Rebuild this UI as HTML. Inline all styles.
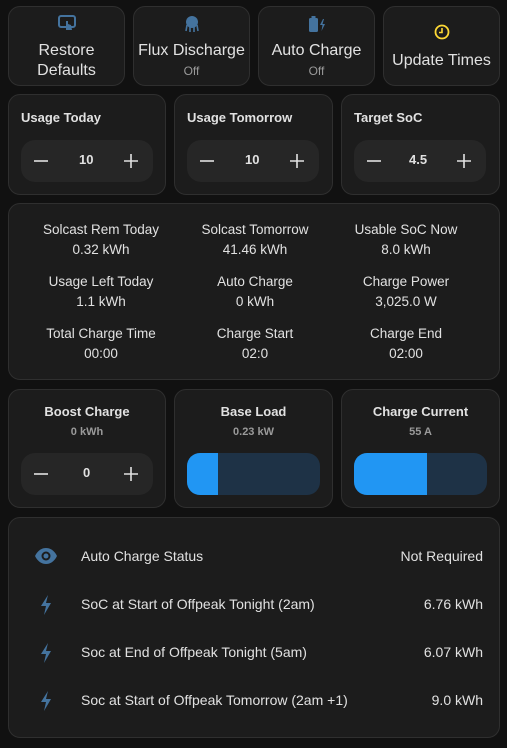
<!DOCTYPE html>
<html><head><meta charset="utf-8"><style>
*{box-sizing:border-box;margin:0;padding:0}
body{width:507px;height:748px;background:#111;font-family:"Liberation Sans",sans-serif;color:#e1e1e1;position:relative;overflow:hidden}
.c{position:absolute;background:#1c1c1c;border:1px solid #2f2f2f;border-radius:12px}
.btn{text-align:center;font-size:16px;line-height:20px}
.btn .s{font-size:12px;color:#9a9a9a;line-height:14px}
.t{position:absolute;left:12px;top:15px;font-size:13px;font-weight:bold}
.step{position:absolute;left:12px;top:45px;width:132px;height:42px;background:#262626;border-radius:14px;font-size:13px;font-weight:bold}
.step span{position:absolute;top:12px}
.step svg{position:absolute;top:14px}
.grid div{position:absolute;width:150px;text-align:center;font-size:13.5px;line-height:20px}
.ct{position:absolute;width:100%;text-align:center;font-size:13px;font-weight:bold;top:14px}
.cs{position:absolute;width:100%;text-align:center;font-size:11px;font-weight:bold;color:#9a9a9a;top:36px}
.sl{position:absolute;left:12px;top:63px;width:133px;height:42px;border-radius:13px;background:#1e3246;overflow:hidden}
.sl i{position:absolute;left:0;top:0;bottom:0;background:#2196f3}
.row{position:absolute;left:0;width:100%;height:20px;font-size:14px}
.row .ic{position:absolute;left:25px;top:0}
.row .l{position:absolute;left:72px;top:2px}
.row .v{position:absolute;right:16px;top:2px}
</style></head><body>
<div class="c btn" style="left:8px;top:6px;width:117px;height:80px">
<svg style="position:absolute;left:49px;top:8px" width="18" height="18" viewBox="0 0 18 18"><rect x="1" y="1" width="16" height="11" rx="2" fill="none" stroke="#44739e" stroke-width="2"/><path d="M8 6v9h6l-1-5-3-1V6z" fill="#44739e"/></svg>
<div style="position:absolute;top:34px;width:100%">Restore<br>Defaults</div></div>
<div class="c btn" style="left:133px;top:6px;width:117px;height:80px">
<svg style="position:absolute;left:50px;top:8px" width="16" height="18" viewBox="0 0 16 18"><circle cx="8" cy="7" r="6" fill="#44739e"/><path d="M3 10l-1 6M6 11v6M10 11v6M13 10l1 6" stroke="#44739e" stroke-width="1.6" fill="none"/></svg>
<div style="position:absolute;top:34px;width:100%">Flux Discharge</div><div class="s" style="position:absolute;top:57px;width:100%">Off</div></div>
<div class="c btn" style="left:258px;top:6px;width:117px;height:80px">
<svg style="position:absolute;left:49px;top:8px" width="20" height="18" viewBox="0 0 20 18"><rect x="1" y="3" width="9" height="14" rx="1.5" fill="#44739e"/><rect x="3.5" y="1" width="4" height="2" fill="#44739e"/><path d="M15 4l-3 6h2.5l-1 6 3.5-7h-2.5l1.5-5z" fill="#44739e"/></svg>
<div style="position:absolute;top:34px;width:100%">Auto Charge</div><div class="s" style="position:absolute;top:57px;width:100%">Off</div></div>
<div class="c btn" style="left:383px;top:6px;width:117px;height:80px">
<svg style="position:absolute;left:50px;top:17px" width="16" height="16" viewBox="0 0 16 16"><circle cx="8" cy="8" r="6.5" fill="none" stroke="#fdd835" stroke-width="1.8"/><path d="M8 4v4.5H5" stroke="#fdd835" stroke-width="1.6" fill="none"/></svg>
<div style="position:absolute;top:44px;width:100%">Update Times</div></div>

<div class="c" style="left:8px;top:94px;width:158px;height:101px"><div class="t">Usage Today</div><div class="step"><svg style="left:13px" width="14" height="14"><path d="M0 7h14" stroke="#e1e1e1" stroke-width="1.6"/></svg><span style="left:58px">10</span><svg style="left:103px" width="14" height="14"><path d="M0 7h14M7 0v14" stroke="#e1e1e1" stroke-width="1.6"/></svg></div></div>
<div class="c" style="left:174px;top:94px;width:159px;height:101px"><div class="t">Usage Tomorrow</div><div class="step"><svg style="left:13px" width="14" height="14"><path d="M0 7h14" stroke="#e1e1e1" stroke-width="1.6"/></svg><span style="left:58px">10</span><svg style="left:103px" width="14" height="14"><path d="M0 7h14M7 0v14" stroke="#e1e1e1" stroke-width="1.6"/></svg></div></div>
<div class="c" style="left:341px;top:94px;width:159px;height:101px"><div class="t">Target SoC</div><div class="step"><svg style="left:13px" width="14" height="14"><path d="M0 7h14" stroke="#e1e1e1" stroke-width="1.6"/></svg><span style="left:55px">4.5</span><svg style="left:103px" width="14" height="14"><path d="M0 7h14M7 0v14" stroke="#e1e1e1" stroke-width="1.6"/></svg></div></div>

<div class="c grid" style="left:8px;top:203px;width:492px;height:177px">
<div style="left:17px;top:16px">Solcast Rem Today<br>0.32 kWh</div>
<div style="left:171px;top:16px">Solcast Tomorrow<br>41.46 kWh</div>
<div style="left:322px;top:16px">Usable SoC Now<br>8.0 kWh</div>
<div style="left:17px;top:68px">Usage Left Today<br>1.1 kWh</div>
<div style="left:171px;top:68px">Auto Charge<br>0 kWh</div>
<div style="left:322px;top:68px">Charge Power<br>3,025.0 W</div>
<div style="left:17px;top:120px">Total Charge Time<br>00:00</div>
<div style="left:171px;top:120px">Charge Start<br>02:0</div>
<div style="left:322px;top:120px">Charge End<br>02:00</div>
</div>

<div class="c" style="left:8px;top:389px;width:158px;height:119px"><div class="ct">Boost Charge</div><div class="cs">0 kWh</div><div class="step" style="top:63px"><svg style="left:13px" width="14" height="14"><path d="M0 7h14" stroke="#e1e1e1" stroke-width="1.6"/></svg><span style="left:62px">0</span><svg style="left:103px" width="14" height="14"><path d="M0 7h14M7 0v14" stroke="#e1e1e1" stroke-width="1.6"/></svg></div></div>
<div class="c" style="left:174px;top:389px;width:159px;height:119px"><div class="ct">Base Load</div><div class="cs">0.23 kW</div><div class="sl"><i style="width:31px"></i></div></div>
<div class="c" style="left:341px;top:389px;width:159px;height:119px"><div class="ct">Charge Current</div><div class="cs">55 A</div><div class="sl"><i style="width:73px"></i></div></div>

<div class="c" style="left:8px;top:517px;width:492px;height:221px">
<div class="row" style="top:28px"><svg class="ic" width="24" height="20" viewBox="0 0 24 20"><path d="M1 10C4 4 8 2 12 2s8 2 11 8c-3 6-7 8-11 8S4 16 1 10z" fill="#44739e"/><circle cx="12" cy="10" r="4.5" fill="#1c1c1c"/><circle cx="12" cy="10" r="2.5" fill="#44739e"/></svg><span class="l">Auto Charge Status</span><span class="v">Not Required</span></div>
<div class="row" style="top:76px"><svg class="ic" style="left:30px" width="14" height="22" viewBox="0 0 14 22"><path d="M9 1L2 12h5l-2 9 7-12H7l2-8z" fill="#44739e"/></svg><span class="l">SoC at Start of Offpeak Tonight (2am)</span><span class="v">6.76 kWh</span></div>
<div class="row" style="top:124px"><svg class="ic" style="left:30px" width="14" height="22" viewBox="0 0 14 22"><path d="M9 1L2 12h5l-2 9 7-12H7l2-8z" fill="#44739e"/></svg><span class="l">Soc at End of Offpeak Tonight (5am)</span><span class="v">6.07 kWh</span></div>
<div class="row" style="top:172px"><svg class="ic" style="left:30px" width="14" height="22" viewBox="0 0 14 22"><path d="M9 1L2 12h5l-2 9 7-12H7l2-8z" fill="#44739e"/></svg><span class="l">Soc at Start of Offpeak Tomorrow (2am +1)</span><span class="v">9.0 kWh</span></div>
</div>
</body></html>
